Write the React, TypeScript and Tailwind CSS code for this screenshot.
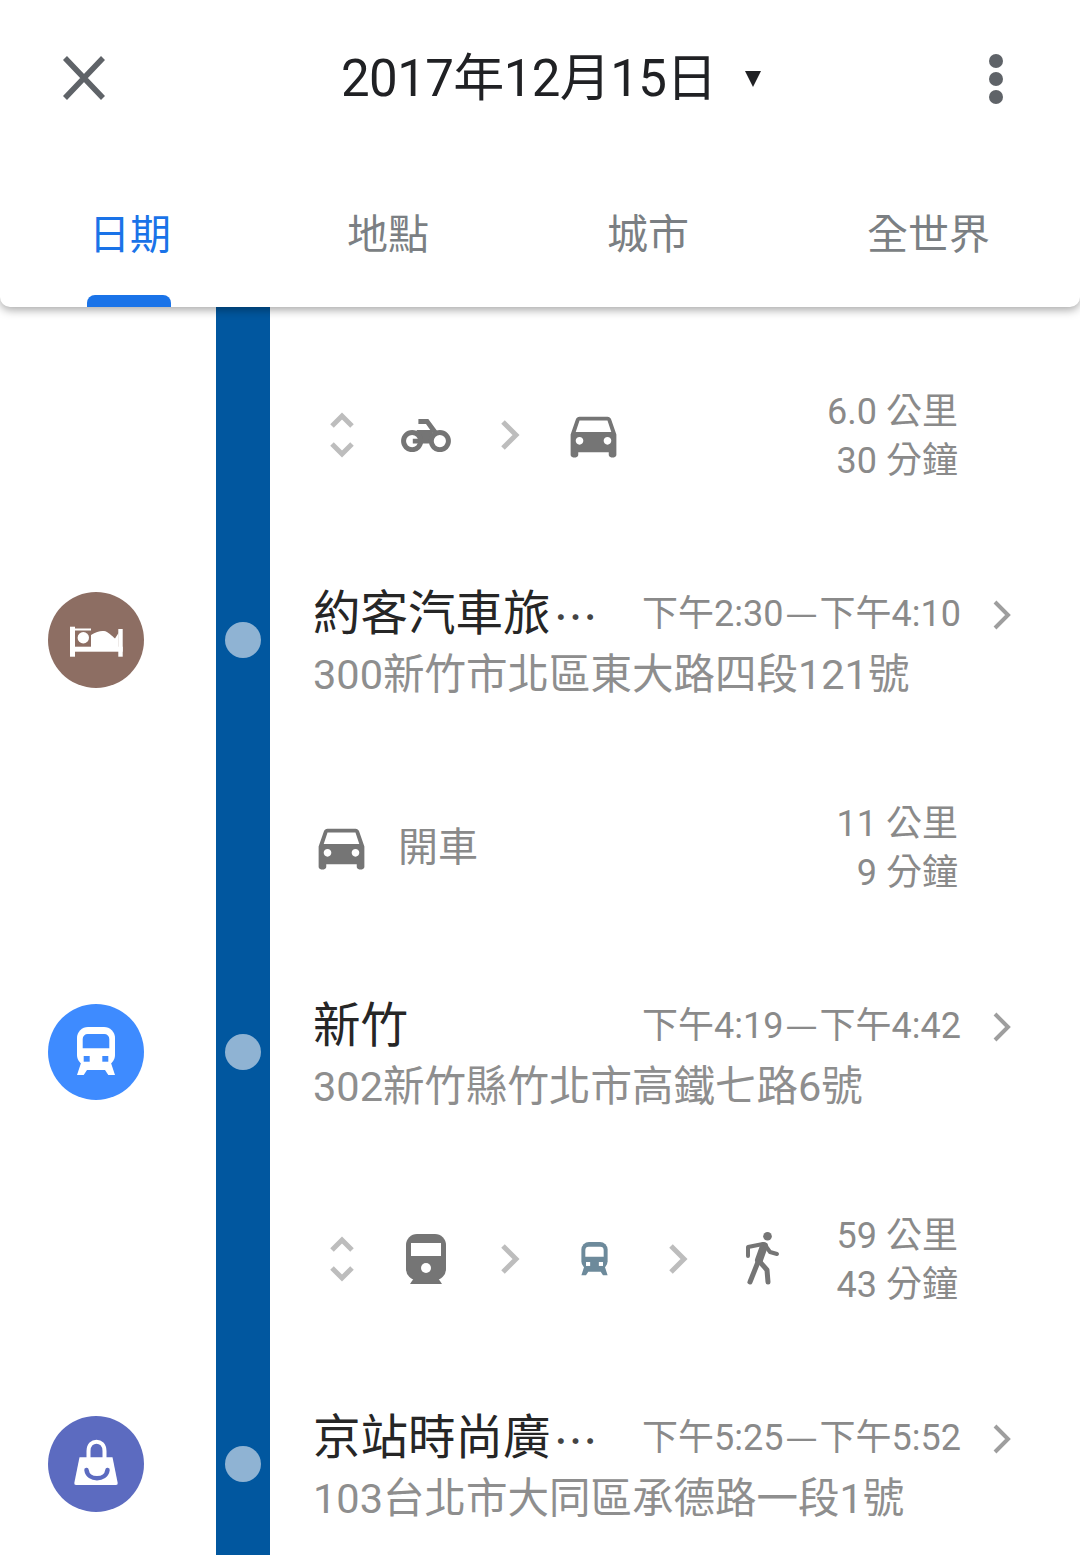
import React from "react";

const FONT = "font-['Roboto','Noto_Sans_CJK_TC',sans-serif]";
const CJK = "font-['Noto_Sans_CJK_TC',sans-serif]";

function UpDown() {
  return (
    <svg width="24" height="46" viewBox="0 0 24 46" fill="none" stroke="#bdbdbd" strokeWidth="5">
      <polyline points="2,14 12,4 22,14" />
      <polyline points="2,32 12,42 22,32" />
    </svg>
  );
}

function Chev() {
  return (
    <svg width="20" height="30" viewBox="0 0 20 30" fill="none" stroke="#bdbdbd" strokeWidth="5">
      <polyline points="3,2 16,15 3,28" />
    </svg>
  );
}

function Car({ size = 61 }: { size?: number }) {
  return (
    <svg className="mr-[2px] mb-[2px]" width={size} height={size} viewBox="0 0 24 24" fill="#757575">
      <path d="M18.92 6.01C18.72 5.42 18.16 5 17.5 5h-11c-.66 0-1.21.42-1.42 1.01L3 12v8c0 .55.45 1 1 1h1c.55 0 1-.45 1-1v-1h12v1c0 .55.45 1 1 1h1c.55 0 1-.45 1-1v-8l-2.08-5.99zM6.5 16c-.83 0-1.5-.67-1.5-1.5S5.67 13 6.5 13s1.5.67 1.5 1.5S7.33 16 6.5 16zm11 0c-.83 0-1.5-.67-1.5-1.5s.67-1.5 1.5-1.5 1.5.67 1.5 1.5-.67 1.5-1.5 1.5zM5 11l1.5-4.5h11L19 11H5z" />
    </svg>
  );
}

function Bike() {
  return (
    <svg width="50" height="33" viewBox="0 0 150 100" fill="#757575">
      <polygon points="52,0 82,0 110,38 97,46 75,15 52,15" />
      <polygon points="46,33 94,33 92,60 84,74 35,74 35,60 60,60" />
      <circle cx="33" cy="67" r="26" fill="none" stroke="#757575" strokeWidth="15" />
      <circle cx="117" cy="67" r="26" fill="none" stroke="#757575" strokeWidth="15" />
    </svg>
  );
}

function TrainFront({ body, inner, w }: { body: string; inner: string; w: number }) {
  return (
    <svg width={w} height={(w * 50) / 42} viewBox="26 23 42 50">
      <path d="M32 59 L28 71 H34.7 L38 66 H56 L59.3 71 H66 L62 59 Z" fill={body} />
      <rect x="28" y="23" width="38" height="39" rx="11" fill={body} />
      <path d="M33.7 44.3 V35 a5 5 0 0 1 5-5 H55.3 a5 5 0 0 1 5 5 V44.3 Z" fill={inner} />
      <rect x="34.7" y="52" width="6" height="5.7" fill={inner} />
      <rect x="53.3" y="52" width="6" height="5.7" fill={inner} />
    </svg>
  );
}

function Rail() {
  return (
    <svg width="42" height="52" viewBox="0 0 42 52" fill="#757575">
      <rect x="1" y="1" width="40" height="46" rx="11" />
      <rect x="6" y="10" width="30" height="13" fill="#fff" />
      <circle cx="21" cy="35" r="5" fill="#fff" />
      <polygon points="5,51 9,45 33,45 37,51" />
    </svg>
  );
}

function Walk() {
  return (
    <svg className="mb-[4px]" width="52" height="66" viewBox="0 0 52 66" fill="none" stroke="#757575" strokeLinecap="round" strokeLinejoin="round">
      <circle cx="31.5" cy="12.3" r="4.3" fill="#757575" stroke="none" />
      <path d="M28 22 L23 36" strokeWidth="8" />
      <path d="M12 32 V23 L27 20" strokeWidth="4" />
      <path d="M29 21 L34 28 L41 30" strokeWidth="4" />
      <path d="M22 38 L14 58" strokeWidth="5" />
      <path d="M24 38 L31 46 L32 58" strokeWidth="5" />
    </svg>
  );
}

function Bed() {
  return (
    <svg width="96" height="96" viewBox="0 0 96 96" fill="#fff">
      <rect x="22" y="34.7" width="5" height="30" />
      <rect x="27" y="36.5" width="16" height="2" />
      <rect x="22" y="54.7" width="52.7" height="5" />
      <rect x="70.3" y="37" width="4.4" height="27.7" />
      <circle cx="35.3" cy="45.7" r="5.7" />
      <path d="M43 55 V43 C48 39.5 53 38.5 56 39 C60 39.5 64 44 67 46.5 L70.5 41 V55 Z" />
    </svg>
  );
}

function Bag() {
  return (
    <svg width="96" height="96" viewBox="0 0 96 96">
      <path d="M40.5 44 V35 C40.5 22.5 56.5 22.5 56.5 35 V44" fill="none" stroke="#fff" strokeWidth="4" />
      <path d="M31.5 41.3 H64.5 L69.7 67 Q70 69 68 69 H28 Q26 69 26.3 67 Z" fill="#fff" />
      <path d="M38.5 54 C40 65 58 65 59.5 54" fill="none" stroke="#5c6bc0" strokeWidth="4.5" strokeLinecap="round" />
    </svg>
  );
}

function IconCell({ children }: { children: React.ReactNode }) {
  return <div className="flex w-[84px] shrink-0 items-center justify-center">{children}</div>;
}

function Travel({
  dist,
  time,
  first,
  children,
}: {
  dist: string;
  time: string;
  first?: boolean;
  children: React.ReactNode;
}) {
  return (
    <div className={`flex ${first ? "h-[231px]" : "h-[208px]"}`}>
      <div className="w-[216px] shrink-0" />
      <div className="w-[54px] shrink-0 bg-[#01579f]" />
      <div className={`flex flex-1 items-center pr-[122px] pl-[30px] ${first ? "pt-[27px]" : "pt-[4px]"}`}>
        <div className="mb-[2px] flex flex-1 items-center">{children}</div>
        <div className="pt-[2px] text-right text-[36px] leading-[49px] text-[#8a8a8a]">
          <div>{dist}</div>
          <div>{time}</div>
        </div>
      </div>
    </div>
  );
}

function Place({
  color,
  icon,
  title,
  time,
  addr,
  more,
}: {
  color: string;
  icon: React.ReactNode;
  title: string;
  time: [string, string];
  addr: string;
  more?: boolean;
}) {
  return (
    <div className="flex h-[204px]">
      <div className="flex w-[216px] shrink-0 items-center pl-12">
        <div className="flex h-24 w-24 items-center justify-center rounded-full" style={{ backgroundColor: color }}>
          {icon}
        </div>
      </div>
      <div className="flex w-[54px] shrink-0 items-center justify-center bg-[#01579f]">
        <div className="h-9 w-9 rounded-full bg-[#8fb3d3]" />
      </div>
      <div className="flex flex-1 flex-col justify-center pl-[43px] pt-[10px]">
        <div className="flex h-[59px] items-center">
          <div className="flex w-[329px] items-center pt-[2px] text-[47.5px] whitespace-nowrap text-[#262626]">
            {title}
            {more && <span className={`${CJK} ml-[3px] text-[44px] text-[#444]`}>⋯</span>}
          </div>
          <div className="mb-[4px] w-[318px] text-right text-[36px] whitespace-nowrap text-[#8a8a8a]">
            {time[0]}
            <span className={`${CJK} mx-[2px]`}>—</span>
            {time[1]}
          </div>
          <svg className="mt-[2px] ml-[32px]" width="22" height="32" viewBox="0 0 22 32" fill="none" stroke="#9e9e9e" strokeWidth="4">
            <polyline points="3,3 16,16 3,29" />
          </svg>
        </div>
        <div className="h-[62px] text-[41.5px] leading-[62px] whitespace-nowrap text-[#8e8e8e]">{addr}</div>
      </div>
    </div>
  );
}

export default function App() {
  return (
    <div className={`${FONT} h-[1555px] w-[1080px] overflow-hidden bg-white`}>
      <header className="relative z-10 h-[307px] rounded-b-[10px] bg-white shadow-[0_3px_10px_rgba(0,0,0,0.35)]">
        <div className="flex h-[156px] items-center pr-[77px] pl-[60px]">
          <svg width="48" height="48" viewBox="0 0 48 48" stroke="#5f6368" strokeWidth="5.5" fill="none">
            <path d="M5 4 L43 44 M43 4 L5 44" />
          </svg>
          <h1 className="ml-[233px] pt-[2px] text-[51px] font-normal tracking-[-0.6px] whitespace-nowrap text-[#202124]">2017年12月15日</h1>
          <svg className="mt-[2px] ml-[28px]" width="16" height="16" viewBox="0 0 16 16" fill="#202124">
            <polygon points="0,0 16,0 8,16" />
          </svg>
          <div className="mt-[2px] ml-auto flex flex-col gap-[4px]">
            <div className="h-[14px] w-[14px] rounded-full bg-[#5f6368]" />
            <div className="h-[14px] w-[14px] rounded-full bg-[#5f6368]" />
            <div className="h-[14px] w-[14px] rounded-full bg-[#5f6368]" />
          </div>
        </div>
        <div className="mt-[55px] flex pl-[89px] text-[41px] leading-[48px] text-[#7b7f83]">
          <div className="w-[258px]">
            <div className="text-[#1a73e8]">日期</div>
            <div className="mt-[36px] -ml-[2px] h-[12px] w-[84px] rounded-t-[8px] bg-[#1a73e8]" />
          </div>
          <div className="w-[260px]">地點</div>
          <div className="w-[260px]">城市</div>
          <div>全世界</div>
        </div>
      </header>
      <main>
        <Travel first dist="6.0 公里" time="30 分鐘">
          <IconCell><UpDown /></IconCell>
          <IconCell><Bike /></IconCell>
          <IconCell><Chev /></IconCell>
          <IconCell><Car /></IconCell>
        </Travel>
        <Place color="#8d6e63" icon={<Bed />} title="約客汽車旅" more time={["下午2:30", "下午4:10"]} addr="300新竹市北區東大路四段121號" />
        <Travel dist="11 公里" time="9 分鐘">
          <IconCell><Car /></IconCell>
          <div className="mt-[2px] ml-[14px] text-[40px] text-[#8a8a8a]">開車</div>
        </Travel>
        <Place
          color="#3e8bff"
          icon={<TrainFront body="#fff" inner="#3e8bff" w={42} />}
          title="新竹"
          time={["下午4:19", "下午4:42"]}
          addr="302新竹縣竹北市高鐵七路6號"
        />
        <Travel dist="59 公里" time="43 分鐘">
          <IconCell><UpDown /></IconCell>
          <IconCell><Rail /></IconCell>
          <IconCell><Chev /></IconCell>
          <IconCell><TrainFront body="#6d8a9b" inner="#fff" w={29} /></IconCell>
          <IconCell><Chev /></IconCell>
          <IconCell><Walk /></IconCell>
        </Travel>
        <Place color="#5c6bc0" icon={<Bag />} title="京站時尚廣" more time={["下午5:25", "下午5:52"]} addr="103台北市大同區承德路一段1號" />
      </main>
    </div>
  );
}
